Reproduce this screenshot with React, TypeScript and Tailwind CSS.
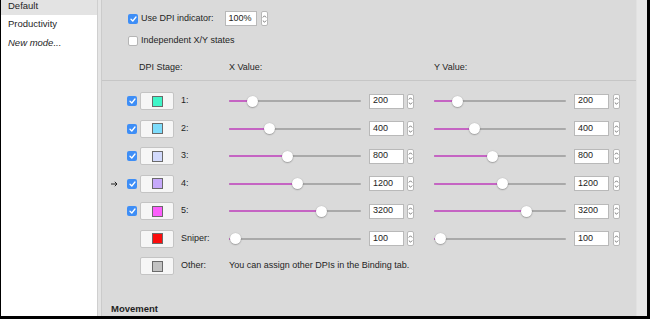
import React from 'react';

interface Stage {
  label: string;
  color: string;
  value: string;
  pos: number; // knob centre, px from track start
  checked?: boolean;
  active?: boolean;
}

const stages: Stage[] = [
  { label: '1:', color: '#3ff5c8', value: '200', pos: 23, checked: true },
  { label: '2:', color: '#7ddcfb', value: '400', pos: 40, checked: true },
  { label: '3:', color: '#d2dafc', value: '800', pos: 58, checked: true },
  { label: '4:', color: '#c6a9fb', value: '1200', pos: 68, checked: true, active: true },
  { label: '5:', color: '#fb5ffb', value: '3200', pos: 92, checked: true },
  { label: 'Sniper:', color: '#fb0d0d', value: '100', pos: 6 },
];

function CheckBox({ checked }: { checked?: boolean }) {
  if (!checked) {
    return <div className="w-[10px] h-[10px] rounded-[2px] bg-white border border-[#b5b5b5] shrink-0" />;
  }
  return (
    <div className="w-[10px] h-[10px] rounded-[2px] bg-[#3e8ef6] flex items-center justify-center shrink-0">
      <svg width="7" height="6" viewBox="0 0 7 6">
        <path d="M1 3.2 L2.8 5 L6 1" fill="none" stroke="white" strokeWidth="1.3" strokeLinecap="round" strokeLinejoin="round" />
      </svg>
    </div>
  );
}

function Stepper() {
  return (
    <div className="w-[7px] h-[15px] rounded-[2px] bg-white border border-[#b8b8b8] flex flex-col items-center justify-center gap-[2px] shrink-0">
      <svg width="5" height="3" viewBox="0 0 5 3">
        <path d="M0.8 2.5 L2.5 0.8 L4.2 2.5" fill="none" stroke="#555" strokeWidth="0.8" />
      </svg>
      <svg width="5" height="3" viewBox="0 0 5 3">
        <path d="M0.8 0.5 L2.5 2.2 L4.2 0.5" fill="none" stroke="#555" strokeWidth="0.8" />
      </svg>
    </div>
  );
}

function NumberBox({ value, width = 'w-[35px]' }: { value: string; width?: string }) {
  return (
    <div className={`${width} h-[15px] bg-white border border-[#b9b9b9] pl-[3px] flex items-center text-[9px] text-[#222] shrink-0`}>
      {value}
    </div>
  );
}

function Slider({ pos }: { pos: number }) {
  return (
    <div className="relative w-[132px] h-[12px] shrink-0 flex items-center">
      <div className="w-full h-[2px] bg-[#a9a9a9] rounded-full" />
      <div className="absolute left-0 h-[2px] bg-[#c564c3] rounded-full" style={{ width: pos }} />
      <div
        className="absolute top-[0.5px] w-[11px] h-[11px] rounded-full bg-white shadow-[0_0.5px_1.5px_rgba(0,0,0,0.45)]"
        style={{ left: pos - 5.5 }}
      />
    </div>
  );
}

function Swatch({ color }: { color: string }) {
  return (
    <div className="w-[34px] h-[18px] rounded-[2px] bg-[#f6f6f6] border border-[#c4c4c4] flex items-center justify-center shrink-0">
      <div className="w-[11px] h-[11px] border border-[#6a6a6a]" style={{ backgroundColor: color }} />
    </div>
  );
}

export default function App() {
  return (
    <div
      className="w-[650px] h-[319px] flex bg-white border-l border-r-[3px] border-b-[3px] border-black overflow-hidden text-[#1f1f1f]"
      style={{ fontFamily: '"Liberation Sans", Arial, sans-serif' }}
    >
      {/* mode list */}
      <div className="w-[97px] shrink-0 bg-white border-r border-[#cfcfcf] text-[9.5px]">
        <div className="-mt-[3px]">
          <div className="h-[18px] flex items-center pl-[7px] bg-[#e3e3e3]">Default</div>
          <div className="h-[19px] flex items-center pl-[7px]">Productivity</div>
          <div className="h-[19px] flex items-center pl-[7px] italic">New mode...</div>
        </div>
      </div>

      <div className="w-[3px] shrink-0 bg-[#e4e4e4]" />

      {/* settings panel */}
      <div className="flex-1 bg-[#dadada] border-l border-[#cbcbcb] flex flex-col text-[9px]">
        <div className="mt-[11px] h-[16px] flex items-center pl-[26px]">
          <CheckBox checked />
          <span className="ml-[3px]">Use DPI indicator:</span>
          <div className="ml-[11px]">
            <NumberBox value="100%" width="w-[32px]" />
          </div>
          <div className="ml-[4px]">
            <Stepper />
          </div>
        </div>

        <div className="mt-[8px] h-[16px] flex items-center pl-[26px]">
          <CheckBox />
          <span className="ml-[3px]">Independent X/Y states</span>
        </div>

        <div className="mt-[13px] h-[16px] flex items-center pl-[37px]">
          <span className="w-[90px]">DPI Stage:</span>
          <span className="w-[205px]">X Value:</span>
          <span>Y Value:</span>
        </div>

        <div className="mt-[6px] border-t border-[#c6c6c6]" />

        <div className="pt-[6px] flex flex-col">
          {stages.map((s) => (
            <div key={s.label} className="h-[27.5px] flex items-center">
              <div className="w-[25px] pl-[9px] shrink-0 flex items-center">
                {s.active && (
                  <svg width="7" height="6" viewBox="0 0 7 6">
                    <path d="M0 3 H6 M3.8 0.8 L6 3 L3.8 5.2" fill="none" stroke="#222" strokeWidth="1" />
                  </svg>
                )}
              </div>
              <div className="w-[10px] shrink-0">{s.checked && <CheckBox checked />}</div>
              <div className="ml-[3px]">
                <Swatch color={s.color} />
              </div>
              <span className="ml-[7px] w-[48px] shrink-0">{s.label}</span>
              <Slider pos={s.pos} />
              <div className="ml-[8px]">
                <NumberBox value={s.value} />
              </div>
              <div className="ml-[3px]">
                <Stepper />
              </div>
              <div className="ml-[20px]">
                <Slider pos={s.pos} />
              </div>
              <div className="ml-[8px]">
                <NumberBox value={s.value} />
              </div>
              <div className="ml-[4px]">
                <Stepper />
              </div>
            </div>
          ))}
          <div className="h-[27.5px] flex items-center">
            <div className="w-[35px] shrink-0" />
            <div className="ml-[3px]">
              <Swatch color="#c2c2c2" />
            </div>
            <span className="ml-[7px] w-[48px] shrink-0">Other:</span>
            <span>You can assign other DPIs in the Binding tab.</span>
          </div>
        </div>

        <div className="mt-[22px] pl-[9px] font-bold text-[9.5px]">Movement</div>
      </div>

      <div className="w-[11px] shrink-0 bg-[#e7e7e7] border-l border-[#e1e1e1]" />
    </div>
  );
}
